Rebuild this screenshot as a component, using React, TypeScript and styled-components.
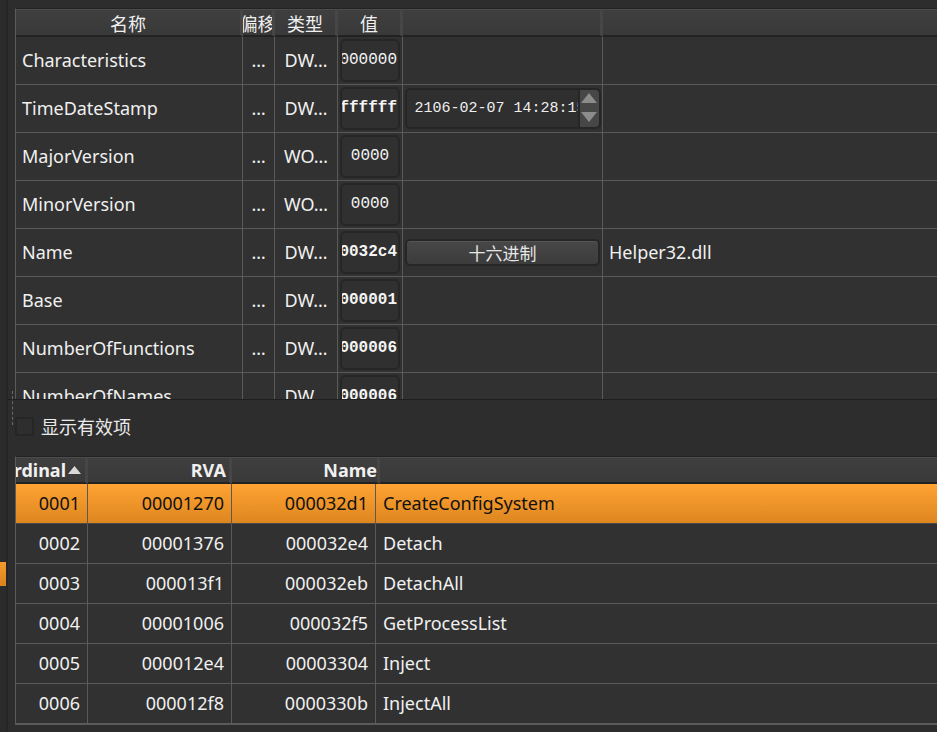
import React from 'react'
import styled, { createGlobalStyle } from 'styled-components'

const GlobalStyle = createGlobalStyle`
  html, body {
    margin: 0;
    padding: 0;
    background: #2d2d2d;
    overflow: hidden;
  }
  body {
    font-family: 'Noto Sans', 'Noto Sans CJK SC', sans-serif;
    color: #f0f0f0;
  }
`

const fields = [
  { name: 'Characteristics', type: 'DW…', value: '00000000', bold: false, center: false },
  { name: 'TimeDateStamp', type: 'DW…', value: 'ffffffff', bold: true, center: false, date: '2106-02-07 14:28:15' },
  { name: 'MajorVersion', type: 'WO…', value: '0000', bold: false, center: true },
  { name: 'MinorVersion', type: 'WO…', value: '0000', bold: false, center: true },
  { name: 'Name', type: 'DW…', value: '000032c4', bold: true, center: false, button: '十六进制', extra: 'Helper32.dll' },
  { name: 'Base', type: 'DW…', value: '00000001', bold: true, center: false },
  { name: 'NumberOfFunctions', type: 'DW…', value: '00000006', bold: true, center: false },
  { name: 'NumberOfNames', type: 'DW…', value: '00000006', bold: true, center: false },
]

const exportsList = [
  { ord: '0001', rva: '00001270', nameRva: '000032d1', name: 'CreateConfigSystem' },
  { ord: '0002', rva: '00001376', nameRva: '000032e4', name: 'Detach' },
  { ord: '0003', rva: '000013f1', nameRva: '000032eb', name: 'DetachAll' },
  { ord: '0004', rva: '00001006', nameRva: '000032f5', name: 'GetProcessList' },
  { ord: '0005', rva: '000012e4', nameRva: '00003304', name: 'Inject' },
  { ord: '0006', rva: '000012f8', nameRva: '0000330b', name: 'InjectAll' },
]

export default function App () {
  return (
    <>
      <GlobalStyle />
      <Window>
        <LeftRail>
          <RailMark />
        </LeftRail>
        <Main>
          <Grip />
          <TopPanel>
            <FieldTable>
              <HeadCell>名称</HeadCell>
              <HeadCell>偏移</HeadCell>
              <HeadCell>类型</HeadCell>
              <HeadCell>值</HeadCell>
              <HeadCell />
              <HeadCell $last />
              {fields.map(f => (
                <React.Fragment key={f.name}>
                  <Cell $pad>{f.name}</Cell>
                  <Cell $center>…</Cell>
                  <Cell $center>{f.type}</Cell>
                  <Cell $center>
                    <ValueBox $center={f.center} $bold={f.bold}>{f.value}</ValueBox>
                  </Cell>
                  <Cell $center>
                    {f.date && (
                      <Spin>
                        <SpinText>{f.date}</SpinText>
                        <SpinButtons>
                          <svg width='18' height='36' viewBox='0 0 18 36'>
                            <polygon points='9,3 17,13 1,13' fill='#8c8c8c' />
                            <polygon points='1,22 17,22 9,32' fill='#8c8c8c' />
                          </svg>
                        </SpinButtons>
                      </Spin>
                    )}
                    {f.button && <HexButton>{f.button}</HexButton>}
                  </Cell>
                  <Cell $pad $last>{f.extra}</Cell>
                </React.Fragment>
              ))}
            </FieldTable>
          </TopPanel>
          <BottomPanel>
            <CheckRow>
              <CheckBox />
              <span>显示有效项</span>
            </CheckRow>
            <ExportTable>
              <ExpHead $right>
                <HeadLabel>Ordinal</HeadLabel>
                <SortArrow width='15' height='10' viewBox='0 0 15 10'>
                  <polygon points='7.5,1 14,9 1,9' fill='#d8d8d8' />
                </SortArrow>
              </ExpHead>
              <ExpHead $right>RVA</ExpHead>
              <ExpHead $right $spill>Name</ExpHead>
              <ExpHead $last />
              {exportsList.map((e, i) => (
                <React.Fragment key={e.ord}>
                  <ExpCell $selected={i === 0} $right>{e.ord}</ExpCell>
                  <ExpCell $selected={i === 0} $right>{e.rva}</ExpCell>
                  <ExpCell $selected={i === 0} $right>{e.nameRva}</ExpCell>
                  <ExpCell $selected={i === 0} $last>{e.name}</ExpCell>
                </React.Fragment>
              ))}
            </ExportTable>
          </BottomPanel>
        </Main>
      </Window>
    </>
  )
}

const Window = styled.div`
  display: flex;
  width: 937px;
  height: 732px;
  overflow: hidden;
  background: #2d2d2d;
`

const LeftRail = styled.div`
  width: 6px;
  flex: none;
  background: #2b2b2b;
  border-right: 2px solid #262626;
  display: flex;
  flex-direction: column;
  padding-top: 562px;
`

const RailMark = styled.div`
  width: 6px;
  height: 24px;
  background: linear-gradient(#f59a2c, #d98420);
`

const Main = styled.div`
  flex: 1;
  display: flex;
  flex-direction: column;
  position: relative;
  min-width: 0;
`

const Grip = styled.div`
  position: absolute;
  left: 4px;
  top: 391px;
  width: 0;
  height: 34px;
  border-left: 1px dashed #6a6a6a;
`

const TopPanel = styled.div`
  height: 391px;
  padding: 8px 0 0 7px;
  overflow: hidden;
  border-bottom: 1px solid #1f1f1f;
`

const FieldTable = styled.div`
  display: grid;
  grid-template-columns: 227px 32px 63px 65px 200px 1fr;
  grid-template-rows: 28px;
  grid-auto-rows: 48px;
  border-top: 1px solid #232323;
  border-left: 1px solid #5a5a5a;
  background: #313131;
`

const HeadCell = styled.div<{ $last?: boolean }>`
  display: flex;
  align-items: center;
  justify-content: center;
  overflow: hidden;
  white-space: nowrap;
  font-size: 18px;
  background: linear-gradient(#3f3f3f, #393939);
  border-top: 1px solid #4c4c4c;
  border-bottom: 2px solid #222;
  border-right: ${p => (p.$last ? 'none' : '3px solid #464646')};
  box-sizing: border-box;
`

const Cell = styled.div<{ $pad?: boolean; $center?: boolean; $last?: boolean }>`
  display: flex;
  align-items: center;
  justify-content: ${p => (p.$center ? 'center' : 'flex-start')};
  padding-left: ${p => (p.$pad ? '6px' : '0')};
  padding-bottom: 1px;
  overflow: hidden;
  white-space: nowrap;
  font-size: 18px;
  border-bottom: 1px solid #5a5a5a;
  border-right: ${p => (p.$last ? 'none' : '1px solid #5a5a5a')};
  box-sizing: border-box;
  min-width: 0;
`

const ValueBox = styled.div<{ $center: boolean; $bold: boolean }>`
  width: 60px;
  height: 43px;
  box-sizing: border-box;
  display: flex;
  align-items: center;
  justify-content: ${p => (p.$center ? 'center' : 'flex-end')};
  padding-right: ${p => (p.$center ? '0' : '1px')};
  overflow: hidden;
  white-space: nowrap;
  background: #303030;
  border: 2px solid #262626;
  border-radius: 5px;
  font-family: 'Liberation Mono', 'DejaVu Sans Mono', monospace;
  font-size: 16px;
  font-weight: ${p => (p.$bold ? 700 : 400)};
  color: #f4f4f4;
`

const Spin = styled.div`
  width: 196px;
  height: 41px;
  box-sizing: border-box;
  display: flex;
  align-items: stretch;
  background: #2f2f2f;
  border: 2px solid #262626;
  border-radius: 5px;
  overflow: hidden;
`

const SpinText = styled.div`
  flex: 1;
  display: flex;
  align-items: center;
  padding-left: 8px;
  overflow: hidden;
  white-space: nowrap;
  font-family: 'Liberation Mono', 'DejaVu Sans Mono', monospace;
  font-size: 15px;
  color: #eee;
`

const SpinButtons = styled.div`
  width: 19px;
  flex: none;
  display: flex;
  align-items: center;
  justify-content: center;
  background: #474747;
  border-left: 2px solid #262626;
  border-radius: 0 4px 4px 0;
`

const HexButton = styled.div`
  width: 195px;
  height: 27px;
  box-sizing: border-box;
  display: flex;
  align-items: center;
  justify-content: center;
  font-size: 17px;
  color: #e6e6e6;
  background: linear-gradient(#474747, #3c3c3c);
  border: 2px solid #262626;
  border-radius: 5px;
  box-shadow: inset 0 1px 0 #555;
`

const BottomPanel = styled.div`
  flex: 1;
  display: flex;
  flex-direction: column;
  padding: 16px 0 0 7px;
  min-height: 0;
`

const CheckRow = styled.div`
  display: flex;
  align-items: center;
  gap: 7px;
  height: 20px;
  font-size: 18px;
  color: #eaeaea;
`

const CheckBox = styled.div`
  width: 19px;
  height: 19px;
  box-sizing: border-box;
  background: #2e2e2e;
  border: 2px solid #262626;
  border-radius: 2px;
`

const ExportTable = styled.div`
  margin-top: 20px;
  display: grid;
  grid-template-columns: 72px 144px 144px 1fr;
  grid-template-rows: 27px;
  grid-auto-rows: 40px;
  border-top: 1px solid #232323;
  border-left: 1px solid #5a5a5a;
  border-bottom: 1px solid #5a5a5a;
  background: #313131;
`

const ExpHead = styled.div<{ $right?: boolean; $last?: boolean; $spill?: boolean }>`
  display: flex;
  align-items: center;
  justify-content: ${p => (p.$right ? 'flex-end' : 'flex-start')};
  gap: 1px;
  padding-right: ${p => (p.$spill ? '0' : '3px')};
  margin-right: ${p => (p.$spill ? '-4px' : '0')};
  overflow: hidden;
  white-space: nowrap;
  font-size: 18px;
  font-weight: 700;
  background: linear-gradient(#3f3f3f, #393939);
  border-top: 1px solid #4c4c4c;
  border-bottom: 2px solid #222;
  border-right: ${p => (p.$last ? 'none' : '3px solid #464646')};
  box-sizing: border-box;
  position: relative;
  z-index: ${p => (p.$spill ? 1 : 0)};
`

const HeadLabel = styled.span`
  flex: none;
`

const SortArrow = styled.svg`
  flex: none;
`

const ExpCell = styled.div<{ $selected?: boolean; $right?: boolean; $last?: boolean }>`
  display: flex;
  align-items: center;
  justify-content: ${p => (p.$right ? 'flex-end' : 'flex-start')};
  padding: 0 7px 1px;
  overflow: hidden;
  white-space: nowrap;
  font-size: 18px;
  color: ${p => (p.$selected ? '#111' : '#f0f0f0')};
  background: ${p => (p.$selected ? 'linear-gradient(#ffa333, #dd861f)' : 'transparent')};
  border-bottom: ${p => (p.$selected ? '1px solid #4a4a4a' : '1px solid #5a5a5a')};
  border-right: ${p => (p.$last ? 'none' : '1px solid #5a5a5a')};
  box-sizing: border-box;
  min-width: 0;
`
